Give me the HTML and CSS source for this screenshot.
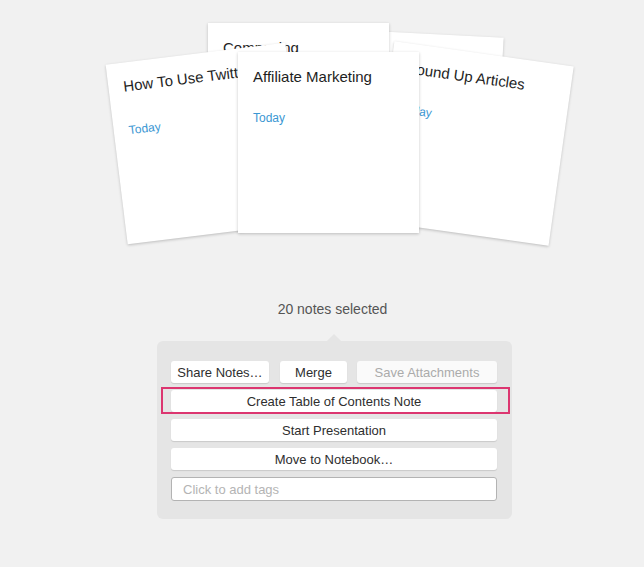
FILE: index.html
```html
<!DOCTYPE html>
<html>
<head>
<meta charset="utf-8">
<link rel="stylesheet" href="styles.css">
</head>
<body>
<div class="stack">
  <div class="note note-backright"><div class="note-title">Research Links</div><div class="note-date">Today</div></div>
  <div class="note note-back"><div class="note-title">Composing</div><div class="note-date">Today</div></div>
  <div class="note note-left"><div class="note-title">How To Use Twitter</div><div class="note-date">Today</div></div>
  <div class="note note-right"><div class="note-title">Round Up Articles</div><div class="note-date">Today</div></div>
  <div class="note note-front"><div class="note-title">Affiliate Marketing</div><div class="note-date">Today</div></div>
</div>
<div class="count">20 notes selected</div>
<div class="panel">
  <div class="row">
    <div class="btn btn-share">Share Notes…</div>
    <div class="btn btn-merge">Merge</div>
    <div class="btn btn-save disabled">Save Attachments</div>
  </div>
  <div class="btn highlight">Create Table of Contents Note</div>
  <div class="btn">Start Presentation</div>
  <div class="btn">Move to Notebook…</div>
  <div class="tags">Click to add tags</div>
</div>
</body>
</html>
```
FILE: styles.css
```css
html, body {
  margin: 0;
  padding: 0;
}
body {
  background: #f1f1f1;
  font-family: "Liberation Sans", Arial, sans-serif;
  width: 644px;
  height: 567px;
  overflow: hidden;
}
.stack {
  position: relative;
  width: 644px;
  height: 301px;
}
.note {
  position: absolute;
  width: 181px;
  height: 181px;
  box-sizing: border-box;
  padding: 16px 15px;
  background: #ffffff;
  box-shadow: 0 1px 3px rgba(0, 0, 0, 0.22);
  overflow: hidden;
  white-space: nowrap;
}
.note-title {
  font-size: 15px;
  line-height: 18px;
  color: #1e1e1e;
}
.note-date {
  margin-top: 25px;
  font-size: 12px;
  line-height: 14px;
  color: #3b97d3;
}
.note-backright {
  left: 318px;
  top: 33px;
  transform: rotate(3deg);
}
.note-back {
  left: 208px;
  top: 23px;
}
.note-left {
  left: 116px;
  top: 53px;
  padding-top: 15px;
  transform: rotate(-7deg);
}
.note-left .note-date {
  margin-top: 28px;
}
.note-right {
  left: 381px;
  top: 53px;
  transform: rotate(8deg);
}
.note-front {
  left: 238px;
  top: 52px;
}
.count {
  text-align: center;
  font-size: 14px;
  line-height: 16px;
  color: #555555;
  width: 665px;
}
.panel {
  position: relative;
  margin: 24px 0 0 157px;
  width: 355px;
  box-sizing: border-box;
  padding: 20px 15px 18px 14px;
  background: #e5e5e5;
  border-radius: 6px;
  display: flex;
  flex-direction: column;
  gap: 7px;
}
.panel::before {
  content: "";
  position: absolute;
  left: 172px;
  top: -5px;
  width: 10px;
  height: 10px;
  background: #e5e5e5;
  transform: rotate(45deg);
}
.row {
  display: flex;
  gap: 10px;
}
.btn {
  position: relative;
  height: 22px;
  box-sizing: border-box;
  padding-top: 1px;
  line-height: 22px;
  background: #ffffff;
  border-radius: 3px;
  box-shadow: 0 1px 1px rgba(0, 0, 0, 0.12);
  text-align: center;
  font-size: 13px;
  color: #2e2e2e;
}
.btn-share { width: 98px; }
.btn-merge { width: 67px; margin-left: 1px; }
.btn-save { width: 140px; }
.disabled {
  color: #ababab;
  background: #fafafa;
}
.highlight::after {
  content: "";
  position: absolute;
  left: -10px;
  right: -13px;
  top: -3px;
  bottom: -2px;
  border: 2px solid #dc3670;
}
.tags {
  height: 24px;
  box-sizing: border-box;
  line-height: 23px;
  border: 1px solid #b3b3b3;
  border-radius: 3px;
  background: #ffffff;
  padding-left: 11px;
  font-size: 13px;
  color: #b4b4b4;
}
```
